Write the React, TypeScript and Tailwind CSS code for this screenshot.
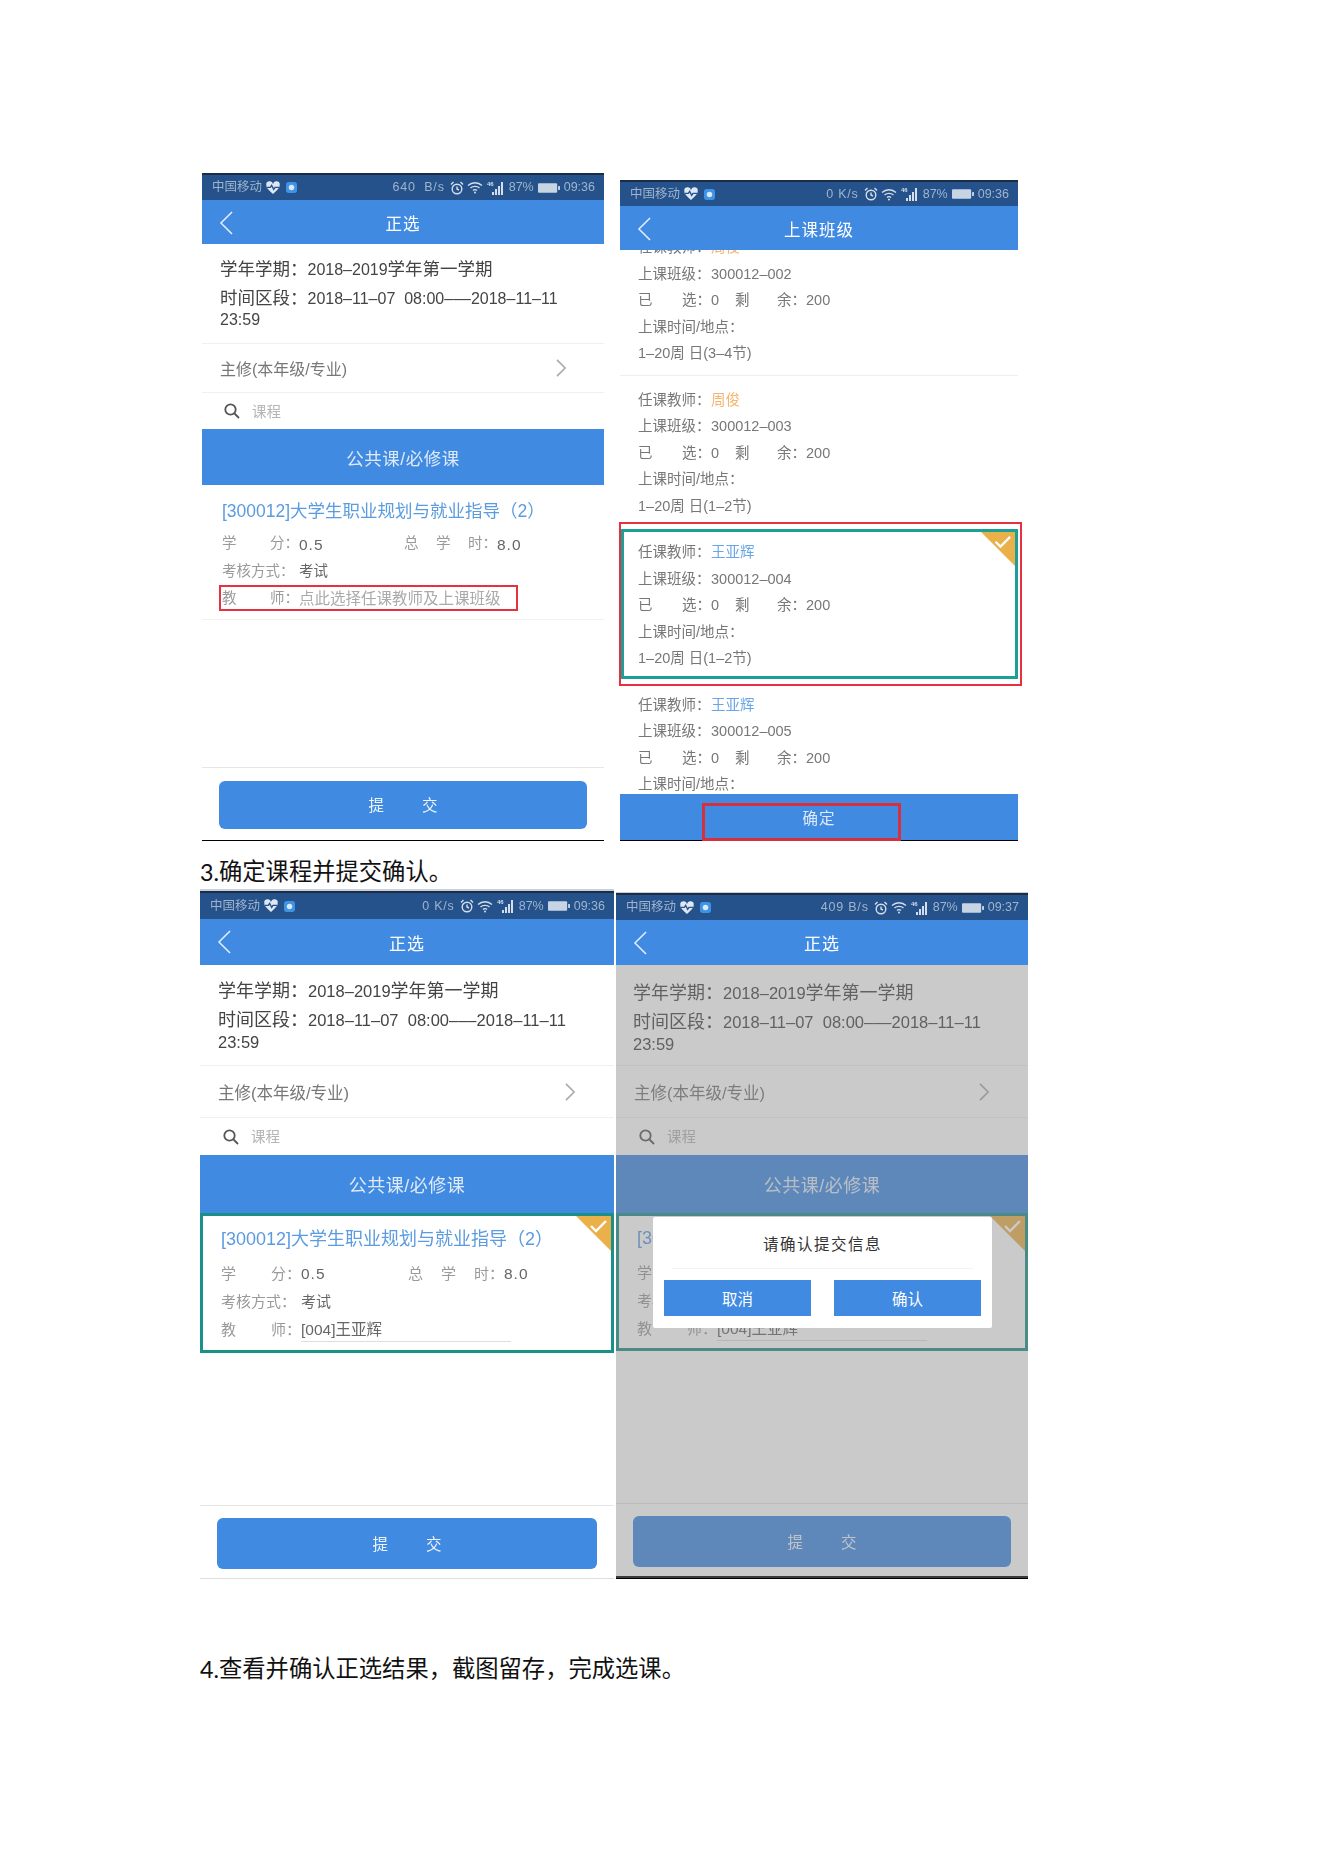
import React from 'react';

const SANS = "font-['Liberation_Sans','Noto_Sans_CJK_SC',sans-serif]";

const sizeA = {
  root: 'w-[402px] h-[668px]',
  status: 'h-[27px]',
  header: 'h-[44px]',
  title: 'text-[16.5px]',
  info: 'h-[99px] pt-[15px] pl-[18px] text-[16px] leading-[21px]',
  cjk: 'text-[17.5px]',
  infoGap: 'mb-[8px]',
  major: 'h-[50px] pl-[18px] pr-[37px] pt-[4px] text-[16px]',
  search: 'h-[36px] pl-[22px] pt-[3px]',
  tab: 'h-[56px] text-[17.5px]',
  card: 'h-[135px] pl-[20px] pt-[13px]',
  cardTitle: 'h-[26px] text-[17.5px] mb-[6px]',
  spacer: 'h-[147px]',
  footer: 'h-[74px] px-[17px] pt-[13px]',
  button: 'h-[48px]',
  row: 'h-[27.5px] text-[14.5px] pt-[1px]',
  label: 'w-[77px]',
  col2: 'w-[105px]',
  label2: 'w-[93px]',
};

const sizeB = {
  ...sizeA,
  status: 'h-[28px]',
  header: 'h-[46px]',
  title: 'text-[17px]',
  info: 'h-[100px] pt-[15px] pl-[18px] text-[16.5px] leading-[22px]',
  cjk: 'text-[18px]',
  infoGap: 'mb-[7px]',
  major: 'h-[53px] pl-[18px] pr-[38px] pt-[4px] text-[16.5px]',
  search: 'h-[37px] pl-[23px] pt-[3px]',
  tab: 'h-[58px] text-[18px]',
  card: 'h-[140px] pl-[18px] pt-[10px]',
  cardTitle: 'h-[26px] text-[18px] mb-[8px]',
  spacer: 'h-[152px]',
  footer: 'h-[74px] px-[17px] pt-[12px]',
  button: 'h-[51px]',
  row: 'h-[28px] text-[15px]',
  label: 'w-[80px]',
  col2: 'w-[107px]',
  label2: 'w-[96px]',
};

type Size = typeof sizeA;

const HeartIcon = () => (
  <svg viewBox="0 0 24 24" className="w-[16px] h-[16px]">
    <path d="M12 21C5 15 2 12 2 8a5 5 0 0 1 10-2 5 5 0 0 1 10 2c0 4-3 7-10 13z" fill="#dfe8f2" />
    <polyline points="3,11 8,11 10,8 13,14 15,11 21,11" fill="none" stroke="#26548f" strokeWidth="2" />
  </svg>
);

const ShieldIcon = () => (
  <svg viewBox="0 0 12 12" className="w-[11px] h-[11px] ml-[5px]">
    <rect x="0" y="0" width="12" height="12" rx="3" fill="#3f93e4" />
    <circle cx="6" cy="6" r="3" fill="#dbe9f6" />
  </svg>
);

const AlarmIcon = () => (
  <svg viewBox="0 0 14 14" className="w-[14px] h-[14px] ml-[5px]" fill="none" stroke="#d5deea" strokeWidth="1.4">
    <circle cx="7" cy="8" r="4.8" />
    <polyline points="7,5.5 7,8 9,9" />
    <path d="M1 3.5 3.5 1M13 3.5 10.5 1" />
  </svg>
);

const WifiIcon = () => (
  <svg viewBox="0 0 16 13" className="w-[16px] h-[13px] ml-[3px]" fill="none" stroke="#d5deea" strokeWidth="1.3">
    <path d="M1 4.5C5 .8 11 .8 15 4.5M3.5 7C6 4.8 10 4.8 12.5 7M6 9.5C7 8.5 9 8.5 10 9.5" />
    <circle cx="8" cy="11.5" r="1" fill="#d5deea" stroke="none" />
  </svg>
);

const SignalIcon = () => (
  <svg viewBox="0 0 20 14" className="w-[20px] h-[14px] ml-[4px]" fill="#d5deea">
    <text x="0" y="5" fontSize="6" fontFamily="Liberation Sans" fontWeight="700">46</text>
    <rect x="5" y="11" width="2" height="3" />
    <rect x="8" y="8" width="2" height="6" />
    <rect x="11" y="5" width="2" height="9" />
    <rect x="14" y="1" width="2" height="13" />
  </svg>
);

const BatteryIcon = () => (
  <svg viewBox="0 0 23 10" className="w-[22px] h-[10px] ml-[4px]">
    <rect x="0" y="0" width="20" height="10" rx="1" fill="#c7d4e4" />
    <rect x="21" y="3" width="2" height="4" fill="#c7d4e4" />
  </svg>
);

const StatusBar = ({ size, speed, time }: { size: Size; speed: string; time: string }) => (
  <div className={`${size.status} flex items-center justify-between bg-[#26528b] border-t-2 border-[#1b2c46] pl-[10px] pr-[9px] text-[#9fb4cc]`}>
    <div className="flex items-center">
      <span className="text-[12.5px] mr-[3px]">中国移动</span>
      <HeartIcon />
      <ShieldIcon />
    </div>
    <div className="flex items-center text-[12.5px]">
      <span className="whitespace-pre tracking-[0.8px]">{speed}</span>
      <AlarmIcon />
      <WifiIcon />
      <SignalIcon />
      <span className="ml-[2px]">87%</span>
      <BatteryIcon />
      <span className="ml-[4px]">{time}</span>
    </div>
  </div>
);

const Header = ({ size, title }: { size: Size; title: string }) => (
  <div className={`${size.header} relative flex items-center justify-center bg-[#408ae2] pt-[5px] text-white ${size.title} tracking-[1px]`}>
    <svg viewBox="0 0 16 26" className="absolute left-[17px] top-[11px] w-[15px] h-[24px]" fill="none" stroke="#e6f0fb" strokeWidth="1.6">
      <polyline points="14,1 2,13 14,25" />
    </svg>
    {title}
  </div>
);

const Info = ({ size }: { size: Size }) => (
  <div className={`${size.info} text-[#444]`}>
    <div className={size.infoGap}>
      <span className={size.cjk}>学年学期：</span>2018–2019<span className={size.cjk}>学年第一学期</span>
    </div>
    <div>
      <span className={size.cjk}>时间区段：</span>2018–11–07&nbsp; 08:00–––2018–11–11
      <br />
      23:59
    </div>
  </div>
);

const Filters = ({ size }: { size: Size }) => (
  <>
    <div className={`${size.major} flex items-center justify-between border-t border-b border-[#f0f0f0] text-[#777]`}>
      <span>主修(本年级/专业)</span>
      <svg viewBox="0 0 12 20" className="w-[11px] h-[18px] -mt-[4px]" fill="none" stroke="#aaa" strokeWidth="1.8">
        <polyline points="1,1 10,10 1,19" />
      </svg>
    </div>
    <div className={`${size.search} flex items-center gap-[12px] text-[14.5px] text-[#b5b5b5]`}>
      <svg viewBox="0 0 16 16" className="w-[16px] h-[16px] -mt-[3px]" fill="none" stroke="#555" strokeWidth="1.8">
        <circle cx="6.5" cy="6.5" r="5.2" />
        <line x1="10.5" y1="10.5" x2="15" y2="15" />
      </svg>
      <span>课程</span>
    </div>
    <div className={`${size.tab} flex items-center justify-center bg-[#408ae2] pt-[4px] tracking-[0.5px] text-[#dfeaf8]`}>
      公共课/必修课
    </div>
  </>
);

const Corner = ({ className }: { className: string }) => (
  <svg viewBox="0 0 35 35" className={`absolute right-0 top-0 ${className}`}>
    <polygon points="0,0 35,0 35,35" fill="#eab04a" />
    <polyline points="15,10 20,15 30,5" fill="none" stroke="#fff" strokeWidth="2.4" />
  </svg>
);

const JustifiedLabel = ({ parts, className }: { parts: string[]; className: string }) => (
  <span className={`${className} flex justify-between text-[#9a9a9a]`}>
    {parts.map((p) => (
      <span key={p}>{p}</span>
    ))}
  </span>
);

const Card = ({ size, selected, teacher }: { size: Size; selected?: boolean; teacher?: string }) => (
  <div className={`${size.card} relative ${selected ? 'border-[3px] border-[#1a9088]' : 'border-b border-[#f2f2f2]'}`}>
    {selected && <Corner className="w-[35px] h-[35px]" />}
    <div className={`${size.cardTitle} flex items-center whitespace-nowrap text-[#5b9be0]`}>[300012]大学生职业规划与就业指导（2）</div>
    <div className={`${size.row} flex items-center text-[#666]`}>
      <JustifiedLabel parts={['学', '分：']} className={size.label} />
      <span className={`${size.col2} text-[15.5px] tracking-[1px]`}>0.5</span>
      <JustifiedLabel parts={['总', '学', '时：']} className={size.label2} />
      <span className="text-[15.5px] tracking-[1px]">8.0</span>
    </div>
    <div className={`${size.row} flex items-center text-[#666]`}>
      <JustifiedLabel parts={['考核方式：']} className={size.label} />
      <span>考试</span>
    </div>
    <div className={`${size.row} relative flex items-center`}>
      <JustifiedLabel parts={['教', '师：']} className={size.label} />
      {teacher ? (
        <span className="w-[210px] border-b border-[#ddd] text-[15.5px] text-[#666]">{teacher}</span>
      ) : (
        <span className="text-[15.5px] text-[#aaa] border-b border-[#ddd] leading-[20px] whitespace-nowrap">点此选择任课教师及上课班级</span>
      )}
      {!teacher && <div className="absolute -left-[3px] top-0 w-[299px] h-[26px] border-2 border-[#e6323f]" />}
    </div>
  </div>
);

const Footer = ({ size, bottom }: { size: Size; bottom: string }) => (
  <div className={`${size.footer} border-t border-[#e6e6e6] ${bottom}`}>
    <div className={`${size.button} flex items-center justify-center gap-[38px] rounded-[6px] bg-[#408ae2] pt-[2px] text-[15.5px] text-[#eef4fc]`}>
      <span>提</span>
      <span>交</span>
    </div>
  </div>
);

const SelectPhone = ({ size, speed, time, teacher, selected, bottom, rootClass }: {
  size: Size; speed: string; time: string; teacher?: string; selected?: boolean; bottom: string; rootClass?: string;
}) => (
  <div className={`${size.root} ${rootClass ?? ''} relative shrink-0 bg-white blur-[0.35px]`}>
    <StatusBar size={size} speed={speed} time={time} />
    <Header size={size} title="正选" />
    <Info size={size} />
    <Filters size={size} />
    <Card size={size} selected={selected} teacher={teacher} />
    <div className={size.spacer} />
    <Footer size={size} bottom={bottom} />
  </div>
);

const ClassItem = ({ name, nameColor, code, period, className }: {
  name: string; nameColor: string; code: string; period?: string; className: string;
}) => (
  <div className={`relative ${className}`}>
    <div className="h-[26.5px] flex items-center">
      <span className="w-[73px] text-[#777]">任课教师：</span>
      <span className={nameColor}>{name}</span>
    </div>
    <div className="h-[26.5px] flex items-center text-[#777]">
      <span className="w-[73px]">上课班级：</span>
      <span>{code}</span>
    </div>
    <div className="h-[26.5px] flex items-center text-[#777]">
      <span className="w-[73px] flex justify-between"><span>已</span><span>选：</span></span>
      <span className="w-[24px]">0</span>
      <span className="w-[71px] flex justify-between"><span>剩</span><span>余：</span></span>
      <span>200</span>
    </div>
    <div className="h-[26.5px] flex items-center text-[#777]">上课时间/地点：</div>
    {period && <div className="h-[26.5px] flex items-center text-[#777]">{period}</div>}
  </div>
);

// 上课班级 list, scrolled so the first row sits under the header
const ClassPhone = () => (
  <div className="relative w-[398px] h-[661px] mt-[7px] shrink-0 bg-white blur-[0.35px]">
    <StatusBar size={{ ...sizeA, status: 'h-[26px]' }} speed="0 K/s" time="09:36" />
    <div className="relative z-10">
      <Header size={sizeA} title="上课班级" />
    </div>
    <div className="h-[544px] overflow-hidden text-[14.5px]">
      <ClassItem className="-mt-[15px] pl-[18px] pb-[7px] border-b border-[#eee]" name="周俊" nameColor="text-[#f5b56e]" code="300012–002" period="1–20周 日(3–4节)" />
      <ClassItem className="pt-[12px] pl-[18px] pb-[9px]" name="周俊" nameColor="text-[#f5b56e]" code="300012–003" period="1–20周 日(1–2节)" />
      <div className="relative border-[3px] border-[#1b9f97] ml-[1px] pl-[14px] pt-[8px] pb-[3px]">
        <Corner className="w-[34px] h-[34px]" />
        <ClassItem className="" name="王亚辉" nameColor="text-[#6aa5e8]" code="300012–004" period="1–20周 日(1–2节)" />
      </div>
      <ClassItem className="pt-[14px] pl-[18px]" name="王亚辉" nameColor="text-[#6aa5e8]" code="300012–005" />
    </div>
    <div className="h-[47px] flex items-center justify-center bg-[#408ae2] border-b border-black pt-[4px] text-[15.5px] text-[#dfeaf8] tracking-[1px]">
      确定
    </div>
    <div className="absolute -left-[1px] top-[342px] w-[403px] h-[164px] border-2 border-[#e6323f]" />
    <div className="absolute left-[82px] top-[623px] w-[199px] h-[38px] border-[3px] border-[#d6303f]" />
  </div>
);

const ConfirmPhone = () => (
  <div className="relative mt-[3px] shrink-0">
    <SelectPhone
      size={{ ...sizeB, root: 'w-[412px] h-[689px]', status: 'h-[27px]', header: 'h-[45px]', info: 'h-[100px] pt-[17px] pl-[17px] text-[16.5px] leading-[22px]', card: 'h-[138px] pl-[18px] pt-[9px]', spacer: 'h-[152px]', footer: 'h-[76px] px-[17px] pt-[12px]' }}
      speed="409 B/s"
      time="09:37"
      teacher="[004]王亚辉"
      selected
      bottom="border-b-[3px] border-b-black"
      rootClass="border-t-[1px] border-[#c5ccd6]"
    />
    <div className="absolute inset-x-0 top-[73px] bottom-[3px] bg-[rgba(134,134,134,0.44)]" />
    <div className="absolute left-[37px] top-[325px] w-[339px] h-[111px] rounded-[2px] bg-white px-[11px]">
      <div className="h-[52px] flex items-center justify-center pt-[4px] text-[15.5px] tracking-[1.5px] text-[#333] border-b border-[#f2f2f2] mx-[8px]">
        请确认提交信息
      </div>
      <div className="mt-[11px] flex justify-between text-[15.5px] text-white">
        <div className="w-[147px] h-[36px] flex items-center justify-center bg-[#408ae2] pt-[3px]">取消</div>
        <div className="w-[147px] h-[36px] flex items-center justify-center bg-[#408ae2] pt-[3px]">确认</div>
      </div>
    </div>
  </div>
);

const App: React.FC = () => {
  return (
    <div className={`${SANS} min-h-[1871px] bg-white pl-[200px] pt-[173px]`}>
      <div className="flex gap-[16px] ml-[2px]">
        <SelectPhone size={sizeA} speed="640  B/s" time="09:36" bottom="border-b border-b-black" />
        <ClassPhone />
      </div>

      <h2 className="h-[48px] pt-[14px] flex items-center text-[23.3px] font-normal text-[#111]">
        <span className="font-['Lato','Noto_Sans_CJK_SC',sans-serif]">3.</span>
        <span>确定课程并提交确认。</span>
      </h2>

      <div className="flex gap-[2px]">
        <SelectPhone
          size={{ ...sizeB, root: 'w-[414px] h-[690px]' }}
          speed="0 K/s"
          time="09:36"
          teacher="[004]王亚辉"
          selected
          bottom="border-b border-b-[#ddd]"
          rootClass="border-t-2 border-[#c8d0da]"
        />
        <ConfirmPhone />
      </div>

      <h2 className="mt-[72px] h-[32px] flex items-center text-[23.3px] font-normal text-[#111]">
        <span className="font-['Lato','Noto_Sans_CJK_SC',sans-serif]">4.</span>
        <span>查看并确认正选结果，截图留存，完成选课。</span>
      </h2>
    </div>
  );
};

export default App;
